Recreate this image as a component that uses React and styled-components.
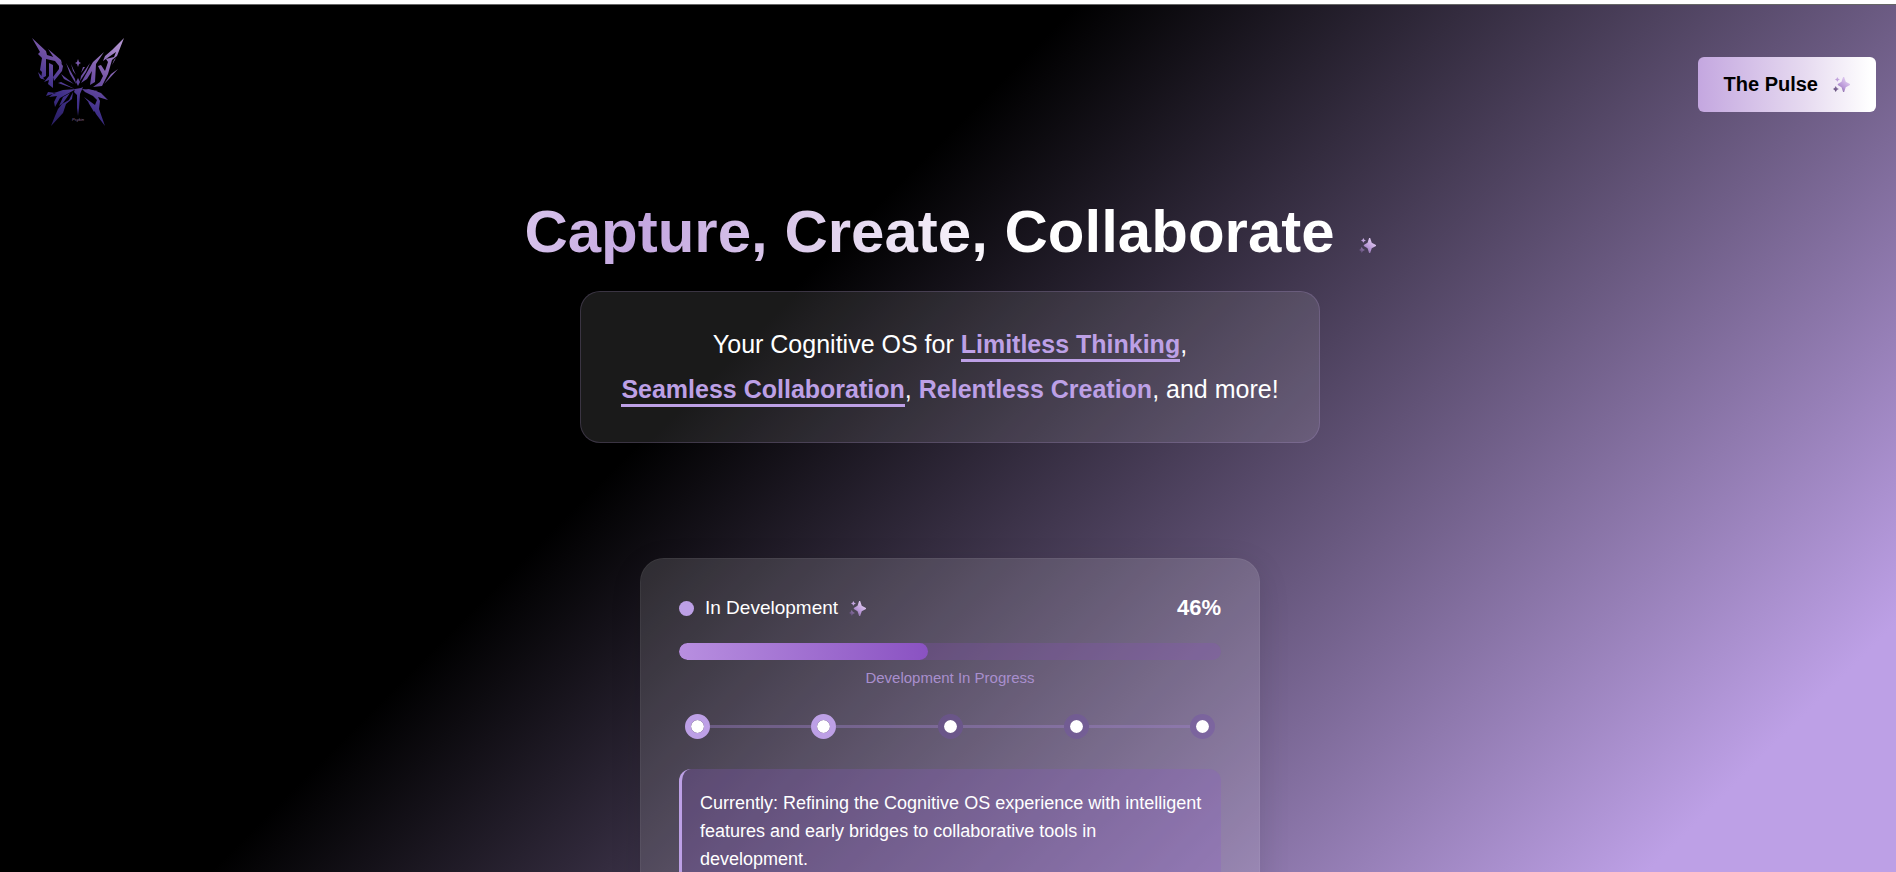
import styled, { createGlobalStyle } from "styled-components";

const GlobalStyle = createGlobalStyle`
    * {
        box-sizing: border-box;
    }
    body {
        margin: 0;
        background-color: black;
        font-family: "Liberation Sans", Arial, sans-serif;
        color: white;
    }
`;

const Container = styled.div`
    height: 100vh;
    overflow: hidden;
    border-top: 4px solid white;
    background: linear-gradient(135deg, #000 39%, #bda0e6 91%);
`;

const Header = styled.header`
    display: flex;
    align-items: center;
    justify-content: space-between;
    height: 159px;
    padding: 0 20px 0 28px;
    border-top: 1px solid #666;
`;

const LogoLink = styled.a`
    display: block;
    height: 104px;
`;

const PulseButton = styled.button`
    display: flex;
    align-items: center;
    gap: 15px;
    height: 55px;
    padding: 0 26px;
    border: none;
    border-radius: 6px;
    background: linear-gradient(90deg, #c4a7e0, #e6daf0 60%, white 97%);
    color: black;
    font: bold 20px "Liberation Sans", Arial, sans-serif;
    cursor: pointer;
`;

const Main = styled.main`
    display: flex;
    flex-direction: column;
    align-items: center;
    padding-left: 4px;
`;

const TitleRow = styled.div`
    display: flex;
    align-items: flex-end;
    gap: 24px;
    margin-top: 33px;
`;

const Title = styled.h1`
    margin: 0;
    font-size: 60px;
    line-height: 72px;
    background: linear-gradient(100deg, #d8c4ec, #c4a7e0 15%, #e6daf0 42%, white 62%);
    background-clip: text;
    color: transparent;
`;

const TitleIcon = styled.span`
    display: flex;
    padding-bottom: 14px;
`;

const Tagline = styled.p`
    margin: 23px 0 0;
    padding: 30px 40px;
    border: 1px solid rgba(189, 160, 230, 0.2);
    border-radius: 20px;
    background-color: rgba(255, 255, 255, 0.1);
    font-size: 25px;
    line-height: 45px;
    text-align: center;
`;

const Highlight = styled.strong`
    padding-bottom: 1px;
    border-bottom: ${(props) => (props.$underlined ? "3px solid #bda0e6" : "none")};
    color: #bda0e6;
`;

const Card = styled.section`
    width: 620px;
    max-width: 100%;
    margin-top: 115px;
    padding: 38px;
    border: 1px solid rgba(255, 255, 255, 0.05);
    border-radius: 24px;
    background-color: rgba(255, 255, 255, 0.13);
    box-shadow: 0 8px 32px rgba(0, 0, 0, 0.1);
`;

const StatusRow = styled.div`
    display: flex;
    align-items: center;
    gap: 11px;
    height: 22px;
`;

const StatusDot = styled.span`
    width: 15px;
    height: 15px;
    border-radius: 50%;
    background-color: #bda0e6;
`;

const StatusText = styled.span`
    font-size: 19px;
`;

const Percent = styled.span`
    margin-left: auto;
    font-size: 22px;
    font-weight: bold;
`;

const Track = styled.div`
    height: 17px;
    margin-top: 24px;
    border-radius: 9px;
    background-color: rgba(138, 80, 190, 0.25);
    overflow: hidden;
`;

const Fill = styled.div`
    height: 100%;
    border-radius: 9px;
    background: linear-gradient(90deg, #b88fe0, #8a52c2);
`;

const Caption = styled.p`
    margin: 9px 0 0;
    color: #a98fce;
    font-size: 15px;
    line-height: 18px;
    text-align: center;
`;

const Steps = styled.ol`
    display: flex;
    align-items: center;
    margin: 27px 6px 0;
    padding: 0;
    list-style: none;
`;

const Step = styled.li`
    display: flex;
    align-items: center;
    flex: ${(props) => (props.$first ? "none" : 1)};

    &::before {
        content: "";
        display: ${(props) => (props.$first ? "none" : "block")};
        flex: 1;
        height: 3px;
        background-color: rgba(160, 130, 205, 0.4);
    }
`;

const StepDot = styled.span`
    width: 25px;
    height: 25px;
    border: 6px solid ${(props) => (props.$done ? "#bda0e6" : "rgba(116, 80, 170, 0.4)")};
    border-radius: 50%;
    background-color: white;
    background-clip: padding-box;
`;

const Note = styled.p`
    margin: 30px 0 0;
    padding: 20px 18px;
    border-left: 3px solid #bda0e6;
    border-radius: 12px;
    background-color: rgba(138, 92, 200, 0.25);
    font-size: 18px;
    line-height: 28px;
`;

const Sparkle = ({ size = 17 }) => (
    <svg width={size} height={size} viewBox="0 0 16 16" aria-hidden="true">
        <defs>
            <linearGradient id="sparkle" x1="1" y1="0" x2="0" y2="1">
                <stop offset="0.2" stopColor="#dcc5ee" />
                <stop offset="0.55" stopColor="#b795d6" />
                <stop offset="1" stopColor="#4c3d60" />
            </linearGradient>
        </defs>
        <path
            fill="url(#sparkle)"
            d="M9.500 1H10.500L12 5.500L16 7.500V8.500L12 10.500L10.500 15H9.500L8 10.500L4.500 8.500V7.500L8 5.500ZM4 1L5 2.500L6.500 3.200L5 4L4 5.500L3.300 4L1.800 3.200L3.300 2.500ZM2.500 9.500L3.700 11.400L5.600 12.300L3.700 13.200L2.500 15L1.500 13.200L0 12.300L1.500 11.400Z"
        />
    </svg>
);

const Logo = () => (
    <svg width="100" height="104" viewBox="0 0 100 104" role="img" aria-label="Butterfly">
        <defs>
            <linearGradient id="wings" gradientUnits="userSpaceOnUse" x1="80" y1="5" x2="35" y2="90">
                <stop offset="0" stopColor="#b092cf" />
                <stop offset="0.4" stopColor="#7756a8" />
                <stop offset="0.75" stopColor="#40308a" />
                <stop offset="1" stopColor="#2c2068" />
            </linearGradient>
        </defs>
        <g fill="url(#wings)">
            {/* upper left wing */}
            <path d="M4 6L18 19L19 23L29 26L35 34L34 39L26 49L25 45L31 37L31 34L27 29L18 27L18 44L13 47L14 40L12 38L14 26L10 22L12 20Z" />
            <path d="M21 31L25 33V56L20 52L21 48L16 50L21 44Z" />
            <path d="M20 17L33 28L34 32L26 26ZM10 40L17 48L12 46Z" />
            {/* upper right wing */}
            <path d="M96 6L89 24L84 28L80 42L74 54L65 55L72 50L75 44L70 34L73 33L77 39L80 30L78 27L86 25L88 20L75 29L77 24L84 18Z" />
            <path d="M76 20L68 32L67 50L62 53L64 39L59 47L53 51L58 42L65 30Z" />
            <path d="M90 37L80 48L76 52L83 42ZM88 26L84 33L86 28Z" />
            {/* rays and body */}
            <path d="M38 31L47 47L48 52L42 42ZM33 42L46 52L36 47ZM33 50L47 57L30 51ZM43 32L48 43L45 39ZM62 31L53 44L52 49L58 40ZM57 35L53 41L55 35Z" />
            <path d="M50 27L51 30L53 31L51 32L50 35L49 32L47 31L49 30ZM50 46L52 50L50 54L48 50Z" />
            <path d="M47 57L53 56L55 55L52 62L51 76L50 84L49 76V63L46 60Z" />
            {/* lower left wing */}
            <path d="M48 57L35 58L26 61L21 65L29 64L26 70L27 75L32 66L41 61ZM45 60L41 68L34 72L30 77L27 84L23 94L35 81L38 72L44 67ZM35 65L42 61L35 71L31 74ZM20 60L28 61L18 64Z" />
            {/* lower right wing */}
            <path d="M54 57L65 58L73 61L80 68L70 65L72 69L71 77L77 94L68 82L64 74L56 65L67 73L69 68L65 64L57 60ZM60 70L68 76L66 80ZM58 57L70 59L66 60Z" />
        </g>
        <text x="50" y="89" fill="#8a6b9c" fontSize="4" fontStyle="italic" textAnchor="middle">
            Psykin
        </text>
    </svg>
);

const App = () => {
    const progress = 46;
    const steps = [true, true, false, false, false];

    return (
        <Container>
            <GlobalStyle />
            <Header>
                <LogoLink href="#">
                    <Logo />
                </LogoLink>
                <PulseButton type="button">
                    The Pulse
                    <Sparkle />
                </PulseButton>
            </Header>

            <Main>
                <TitleRow>
                    <Title>Capture, Create, Collaborate</Title>
                    <TitleIcon>
                        <Sparkle />
                    </TitleIcon>
                </TitleRow>

                <Tagline>
                    Your Cognitive OS for <Highlight $underlined>Limitless Thinking</Highlight>,
                    <br />
                    <Highlight $underlined>Seamless Collaboration</Highlight>, <Highlight>Relentless Creation</Highlight>, and more!
                </Tagline>

                <Card>
                    <StatusRow>
                        <StatusDot />
                        <StatusText>In Development</StatusText>
                        <Sparkle />
                        <Percent>{progress}%</Percent>
                    </StatusRow>
                    <Track>
                        <Fill style={{ width: `${progress}%` }} />
                    </Track>
                    <Caption>Development In Progress</Caption>
                    <Steps>
                        {steps.map((done, i) => (
                            <Step key={i} $first={i === 0}>
                                <StepDot $done={done} />
                            </Step>
                        ))}
                    </Steps>
                    <Note>
                        Currently: Refining the Cognitive OS experience with intelligent features and early bridges to collaborative tools in
                        <br />
                        development.
                    </Note>
                </Card>
            </Main>
        </Container>
    );
};

export default App;
